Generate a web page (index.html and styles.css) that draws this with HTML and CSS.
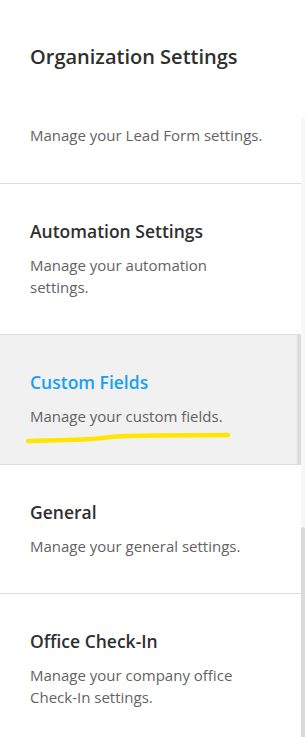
FILE: index.html
```html
<!DOCTYPE html>
<html lang="en">
  <head>
    <meta charset="UTF-8" />
    <meta name="viewport" content="width=device-width, initial-scale=1.0" />
    <title>Organization Settings</title>
    <link rel="stylesheet" href="styles.css">
  </head>
  <body>
    <div class="page">
      <div class="settings-list">
        <div class="list-header">
          <h1>Organization Settings</h1>
        </div>

        <div class="item item-lead">
          <p>Manage your Lead Form settings.</p>
        </div>

        <div class="item">
          <h2>Automation Settings</h2>
          <p>Manage your automation settings.</p>
        </div>

        <div class="item active">
          <h2>Custom Fields</h2>
          <p>Manage your custom fields.</p>
          <!-- hand drawn highlight -->
          <svg class="scribble" width="240" height="16" viewBox="0 0 240 16">
            <path d="M28 10 C 50 9.5, 80 9, 97 7.5 C 105 6.5, 110 5.5, 125 5 C 160 4.5, 200 4.2, 228 4" />
          </svg>
        </div>

        <div class="item">
          <h2>General</h2>
          <p>Manage your general settings.</p>
        </div>

        <div class="item">
          <h2>Office Check-In</h2>
          <p>Manage your company office Check-In settings.</p>
        </div>
      </div>

      <div class="scrollbar">
        <div class="scroll-track">
          <div class="scroll-thumb"></div>
        </div>
      </div>
    </div>
  </body>
</html>
```

FILE: styles.css
```css
body {
  margin: 0;
  font-family: "Open Sans", "Noto Sans", sans-serif;
  background-color: #fff;
  height: 737px;
  overflow: hidden;
}

.page {
  display: flex;
  height: 737px;
}

.settings-list {
  width: 301px;
  flex-shrink: 0;
}

.list-header {
  padding: 45px 30px 0 30px;
}

.list-header h1 {
  margin: 0;
  font-size: 20px;
  line-height: 24px;
  font-weight: 600;
  color: #2f2f2f;
}

.item {
  position: relative;
  padding: 35px 37px 36px 30px;
  border-bottom: 1px solid #dddddd;
}

.item-lead {
  padding-top: 55px;
  padding-bottom: 37px;
}

.item h2 {
  margin: 0 0 11px 0;
  font-size: 17.5px;
  line-height: 24px;
  font-weight: 600;
  color: #2f2f2f;
}

.item p {
  margin: 0;
  font-size: 15px;
  line-height: 22px;
  color: #636363;
}

.item.active {
  background-color: #f1f1f1;
  border-right: 4px solid #dcdcdc;
  padding-right: 33px;
  padding-bottom: 37px;
}

.item.active h2 {
  color: #1a9ff0;
}

.scribble {
  position: absolute;
  left: 0;
  top: 96px;
}

.scribble path {
  fill: none;
  stroke: #ffe500;
  stroke-width: 4.5;
  stroke-linecap: round;
}

.scrollbar {
  width: 4px;
  padding-top: 117px;
  display: flex;
  flex-direction: column;
}

.scroll-track {
  flex: 1;
  background-color: #f7f7f7;
  border-radius: 3px 3px 0 0;
  display: flex;
  flex-direction: column;
  justify-content: flex-end;
}

.scroll-thumb {
  height: 210px;
  background-color: #dadada;
  border-radius: 3px 3px 0 0;
}
```
